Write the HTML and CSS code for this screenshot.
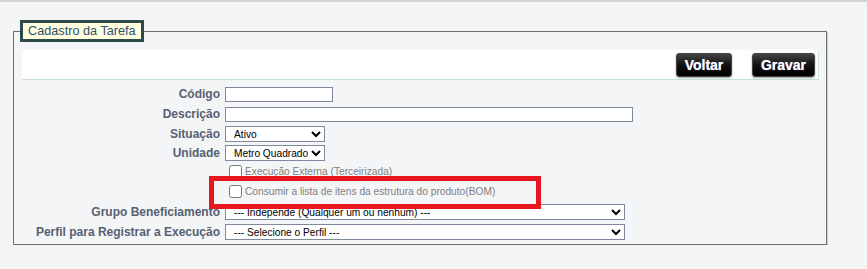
FILE: index.html
```html
<!DOCTYPE html>
<html lang="pt-BR">
<head>
    <meta charset="UTF-8">
    <title>Cadastro da Tarefa</title>
    <link rel="stylesheet" href="styles.css">
</head>
<body>
    <div class="topo"></div>
    <fieldset class="cadastro">
        <legend>Cadastro da Tarefa</legend>
        <div class="barra">
            <button class="btn voltar">Voltar</button>
            <button class="btn gravar">Gravar</button>
        </div>
        <div class="form">
            <label class="rotulo r1">Código</label>
            <div class="campo r1"><input type="text" class="txt codigo"></div>

            <label class="rotulo r2">Descrição</label>
            <div class="campo r2"><input type="text" class="txt descricao"></div>

            <label class="rotulo r3">Situação</label>
            <div class="campo r3">
                <select class="sel curto"><option>Ativo</option><option>Inativo</option></select>
            </div>

            <label class="rotulo r4">Unidade</label>
            <div class="campo r4">
                <select class="sel curto"><option>Metro Quadrado</option></select>
            </div>

            <div class="rotulo r5"></div>
            <div class="campo r5 check"><input type="checkbox"> Execução Externa (Terceirizada)</div>

            <div class="rotulo r6"></div>
            <div class="campo r6 check"><input type="checkbox"> Consumir a lista de itens da estrutura do produto(BOM)</div>

            <label class="rotulo r7">Grupo Beneficiamento</label>
            <div class="campo r7">
                <select class="sel longo"><option>--- Independe (Qualquer um ou nenhum) ---</option></select>
            </div>

            <label class="rotulo r8">Perfil para Registrar a Execução</label>
            <div class="campo r8">
                <select class="sel longo"><option>--- Selecione o Perfil ---</option></select>
            </div>
        </div>
    </fieldset>
    <div class="destaque"></div>
</body>
</html>
```

FILE: styles.css
```css
body {
    margin: 0;
    background: #f4f5f7;
    font-family: Arial, "Liberation Sans", sans-serif;
}
.topo {
    height: 2px;
    background: #d2d3d5;
}
.cadastro {
    box-sizing: border-box;
    width: 814px;
    margin: 18px 0 0 13px;
    padding: 8px 7px 2px 8px;
    border: 1px solid #6e6e6e;
    box-shadow: 1px 1px 0 #d0d0d0;
}
.cadastro legend {
    margin-left: -2px;
    padding: 0 5px;
    height: 22px;
    box-sizing: border-box;
    line-height: 16px;
    border: 3px solid #2d4b4b;
    background: #ffffe0;
    color: #2f4f73;
    font-size: 12.7px;
}
.barra {
    display: flex;
    justify-content: flex-end;
    align-items: center;
    gap: 20px;
    height: 29px;
    padding-right: 3px;
    background: #fff;
    border-bottom: 1px solid #c8dede;
    border-right: 1px solid #d4e6e6;
}
.btn {
    height: 24px;
    padding: 0;
    border: 1px solid #444;
    border-radius: 3px;
    background: linear-gradient(#444, #111 50%, #000);
    color: #fff;
    font-family: Arial, "Liberation Sans", sans-serif;
    font-size: 14px;
    font-weight: bold;
    text-shadow: 0 0 1px #9ad;
    box-shadow: 0 1px 2px rgba(0, 0, 0, 0.4);
    cursor: pointer;
}
.btn.voltar {
    width: 56px;
}
.btn.gravar {
    width: 63px;
}
.form {
    display: grid;
    grid-template-columns: 198px 1fr;
    grid-template-rows: 20px 20px 20px 18px 19px 21px 20px 20px;
    column-gap: 5px;
    margin-top: 4px;
}
.rotulo {
    display: flex;
    align-items: center;
    justify-content: flex-end;
    color: #566173;
    font-size: 12px;
    font-weight: bold;
}
.campo {
    display: flex;
    align-items: center;
}
.txt {
    box-sizing: border-box;
    height: 15px;
    padding: 0 3px;
    border: 1px solid #7f8a9c;
    background: #fff;
    font-size: 10px;
}
.txt.codigo {
    width: 108px;
}
.txt.descricao {
    width: 408px;
}
.sel {
    box-sizing: border-box;
    height: 16px;
    padding: 0 0 0 4px;
    border: 1px solid #7f8a9c;
    border-radius: 0;
    background: #fff;
    color: #000;
    font-family: Arial, "Liberation Sans", sans-serif;
    font-size: 10.2px;
}
.sel.curto {
    width: 100px;
}
.sel.longo {
    width: 400px;
}
.check {
    color: #808080;
    font-size: 10.2px;
}
.check input {
    margin: 0 3px 0 4px;
}
.destaque {
    position: absolute;
    left: 209px;
    top: 176px;
    width: 332px;
    height: 33px;
    box-sizing: border-box;
    border: 5px solid #e8161f;
}
```
